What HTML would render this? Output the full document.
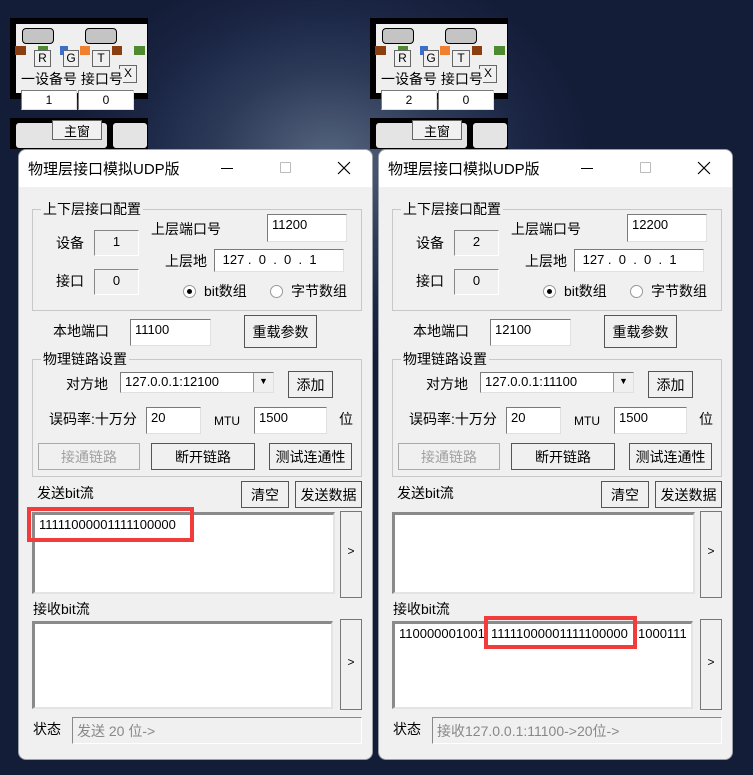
<!DOCTYPE html>
<html><head><meta charset="utf-8">
<style>
*{box-sizing:border-box;margin:0;padding:0}
body{width:753px;height:775px;overflow:hidden;position:relative;font-family:"Liberation Sans","Noto Sans CJK SC",sans-serif;font-size:14px;color:#000;
background:radial-gradient(ellipse 260px 200px at 330px 160px,#56657f 0%,#2c3a58 45%,#1b2645 75%,#141d38 100%),#141d38;}
.a{position:absolute}
.win{position:absolute;top:149px;width:355px;height:611px;background:#f0f0f0;border-radius:8px;overflow:hidden;border:1px solid #9aa0a8}
.tb{position:absolute;left:0;top:0;width:100%;height:37px;background:#fff}
.tt{position:absolute;left:9px;top:8px;font-size:15px}
.grp{position:absolute;border:1px solid #c8c8c8}
.gt{position:absolute;background:#f0f0f0;padding:0 2px;white-space:nowrap}
.in{position:absolute;background:#fff;border:1px solid #7a7a7a;border-right-color:#e0e0e0;border-bottom-color:#e0e0e0;font-size:13px;padding:2px 4px;white-space:nowrap}
.ro{position:absolute;background:#f0f0f0;border:1px solid #888;border-right-color:#fff;border-bottom-color:#fff;font-size:13px;text-align:center;padding-top:3px}
.ta{position:absolute;background:#fff;border:3px solid #8a8a8a;border-right:2px solid #e4e4e4;border-bottom:2px solid #e4e4e4}
.bt{position:absolute;background:#f0f0f0;border:1px solid #555;text-align:center;font-size:14px;white-space:nowrap}
.red{position:absolute;border:4px solid #f23b3b}
.rad{position:absolute;width:13px;height:13px;border-radius:50%;background:#fff;border:1px solid #999}
.wg{position:absolute;top:18px;width:138px;height:131px}
</style></head><body>

<div class="wg" style="left:10px">
 <div class="a" style="left:0;top:0;width:138px;height:81px;background:#000"></div>
 <div class="a" style="left:5px;top:5px;width:133px;height:71px;background:#efefef;border:1px solid #000"></div>
 <div class="a" style="left:12px;top:10px;width:32px;height:16px;background:#c4c4c4;border:1px solid #000;border-radius:4px"></div>
 <div class="a" style="left:75px;top:10px;width:32px;height:16px;background:#c4c4c4;border:1px solid #000;border-radius:4px"></div>
 <div class="a" style="left:5px;top:28px;width:11px;height:9px;background:#8b3e10"></div>
 <div class="a" style="left:28px;top:28px;width:10px;height:9px;background:#4f8a30"></div>
 <div class="a" style="left:50px;top:28px;width:8px;height:9px;background:#3b6fc9"></div>
 <div class="a" style="left:70px;top:28px;width:10px;height:9px;background:#ee8030"></div>
 <div class="a" style="left:102px;top:28px;width:10px;height:9px;background:#8b3e10"></div>
 <div class="a" style="left:124px;top:28px;width:11px;height:9px;background:#4f8a30"></div>
 <div class="bt" style="left:24px;top:32px;width:17px;height:17px;font-size:12px;border-color:#666">R</div>
 <div class="bt" style="left:53px;top:32px;width:16px;height:17px;font-size:12px;border-color:#666">G</div>
 <div class="bt" style="left:82px;top:32px;width:18px;height:17px;font-size:12px;border-color:#666">T</div>
 <div class="bt" style="left:109px;top:47px;width:18px;height:18px;font-size:12px;border-color:#666">X</div>
 <div class="a" style="left:11px;top:51px;font-size:14px;white-space:nowrap;background:#efefef">一设备号 接口号</div>
 <div class="in" style="left:11px;top:72px;width:56px;height:20px;text-align:center;font-size:12px;padding:2px">1</div>
 <div class="in" style="left:68px;top:72px;width:56px;height:20px;text-align:center;font-size:12px;padding:2px">0</div>
 <div class="a" style="left:0;top:100px;width:138px;height:31px;background:#000"></div>
 <div class="a" style="left:5px;top:104px;width:93px;height:27px;background:#e4e4e4;border:1px solid #000;border-radius:4px"></div>
 <div class="a" style="left:102px;top:104px;width:36px;height:27px;background:#e4e4e4;border:1px solid #000;border-radius:4px"></div>
 <div class="bt" style="left:42px;top:102px;width:50px;height:20px;font-size:13px;border-color:#666">主窗</div>
</div>
<div class="wg" style="left:370px">
 <div class="a" style="left:0;top:0;width:138px;height:81px;background:#000"></div>
 <div class="a" style="left:5px;top:5px;width:133px;height:71px;background:#efefef;border:1px solid #000"></div>
 <div class="a" style="left:12px;top:10px;width:32px;height:16px;background:#c4c4c4;border:1px solid #000;border-radius:4px"></div>
 <div class="a" style="left:75px;top:10px;width:32px;height:16px;background:#c4c4c4;border:1px solid #000;border-radius:4px"></div>
 <div class="a" style="left:5px;top:28px;width:11px;height:9px;background:#8b3e10"></div>
 <div class="a" style="left:28px;top:28px;width:10px;height:9px;background:#4f8a30"></div>
 <div class="a" style="left:50px;top:28px;width:8px;height:9px;background:#3b6fc9"></div>
 <div class="a" style="left:70px;top:28px;width:10px;height:9px;background:#ee8030"></div>
 <div class="a" style="left:102px;top:28px;width:10px;height:9px;background:#8b3e10"></div>
 <div class="a" style="left:124px;top:28px;width:11px;height:9px;background:#4f8a30"></div>
 <div class="bt" style="left:24px;top:32px;width:17px;height:17px;font-size:12px;border-color:#666">R</div>
 <div class="bt" style="left:53px;top:32px;width:16px;height:17px;font-size:12px;border-color:#666">G</div>
 <div class="bt" style="left:82px;top:32px;width:18px;height:17px;font-size:12px;border-color:#666">T</div>
 <div class="bt" style="left:109px;top:47px;width:18px;height:18px;font-size:12px;border-color:#666">X</div>
 <div class="a" style="left:11px;top:51px;font-size:14px;white-space:nowrap;background:#efefef">一设备号 接口号</div>
 <div class="in" style="left:11px;top:72px;width:56px;height:20px;text-align:center;font-size:12px;padding:2px">2</div>
 <div class="in" style="left:68px;top:72px;width:56px;height:20px;text-align:center;font-size:12px;padding:2px">0</div>
 <div class="a" style="left:0;top:100px;width:138px;height:31px;background:#000"></div>
 <div class="a" style="left:5px;top:104px;width:93px;height:27px;background:#e4e4e4;border:1px solid #000;border-radius:4px"></div>
 <div class="a" style="left:102px;top:104px;width:36px;height:27px;background:#e4e4e4;border:1px solid #000;border-radius:4px"></div>
 <div class="bt" style="left:42px;top:102px;width:50px;height:20px;font-size:13px;border-color:#666">主窗</div>
</div>

<div class="win" style="left:18px">
 <div class="tb"><div class="tt">物理层接口模拟UDP版</div>
  <div class="a" style="left:202px;top:18px;width:12px;height:1px;background:#000"></div>
  <div class="a" style="left:261px;top:12px;width:11px;height:11px;border:1px solid #bbb;border-radius:1px"></div>
  <svg class="a" style="left:318px;top:11px" width="14" height="14"><path d="M1 1L13 13M13 1L1 13" stroke="#000" stroke-width="1.2"/></svg>
 </div>
 <div class="grp" style="left:13px;top:59px;width:330px;height:102px"></div>
 <div class="gt" style="left:22px;top:49px">上下层接口配置</div>
 <div class="a" style="left:37px;top:83px">设备</div><div class="ro" style="left:75px;top:80px;width:45px;height:26px">1</div>
 <div class="a" style="left:37px;top:121px">接口</div><div class="ro" style="left:75px;top:119px;width:45px;height:26px">0</div>
 <div class="a" style="left:132px;top:69px">上层端口号</div><div class="in" style="left:248px;top:64px;width:80px;height:28px">11200</div>
 <div class="a" style="left:146px;top:101px">上层地</div><div class="in" style="left:195px;top:99px;width:130px;height:23px">&nbsp;127 .&nbsp; 0 &nbsp;.&nbsp; 0 &nbsp;.&nbsp; 1</div>
 <div class="rad" style="left:164px;top:135px"><div class="a" style="left:3px;top:3px;width:5px;height:5px;border-radius:50%;background:#000"></div></div>
 <div class="a" style="left:185px;top:131px">bit数组</div>
 <div class="rad" style="left:251px;top:135px"></div>
 <div class="a" style="left:272px;top:131px">字节数组</div>
 <div class="a" style="left:34px;top:171px">本地端口</div><div class="in" style="left:111px;top:169px;width:81px;height:27px">11100</div>
 <div class="bt" style="left:225px;top:165px;width:73px;height:33px;padding-top:6px">重载参数</div>
 <div class="grp" style="left:13px;top:209px;width:330px;height:118px"></div>
 <div class="gt" style="left:22px;top:199px">物理链路设置</div>
 <div class="a" style="left:47px;top:224px">对方地</div>
 <div class="in" style="left:101px;top:222px;width:154px;height:21px;padding-top:1px">127.0.0.1:12100<div class="a" style="right:0;top:0;width:20px;height:19px;background:#f0f0f0;border-left:1px solid #999;font-size:9px;text-align:center;padding-top:3px">▼</div></div>
 <div class="bt" style="left:269px;top:221px;width:45px;height:27px;padding-top:3px">添加</div>
 <div class="a" style="left:30px;top:259px">误码率:十万分</div><div class="in" style="left:127px;top:257px;width:55px;height:27px">20</div>
 <div class="a" style="left:195px;top:264px;font-size:12px">MTU</div><div class="in" style="left:235px;top:257px;width:73px;height:27px">1500</div>
 <div class="a" style="left:320px;top:259px">位</div>
 <div class="bt" style="left:19px;top:293px;width:102px;height:27px;padding-top:3px;color:#a0a0a0;border-color:#aaa">接通链路</div>
 <div class="bt" style="left:132px;top:293px;width:104px;height:27px;padding-top:3px">断开链路</div>
 <div class="bt" style="left:250px;top:293px;width:83px;height:27px;padding-top:3px">测试连通性</div>
 <div class="a" style="left:18px;top:333px">发送bit流</div>
 <div class="bt" style="left:222px;top:331px;width:48px;height:27px;padding-top:3px">清空</div>
 <div class="bt" style="left:276px;top:331px;width:67px;height:27px;padding-top:3px">发送数据</div>
 <div class="ta" style="left:13px;top:362px;width:303px;height:82px"><div class="a" style="left:4px;top:2px;font-size:13px">11111000001111100000</div></div>
 <div class="red" style="left:8px;top:357px;width:167px;height:35px"></div>
 <div class="bt" style="left:321px;top:361px;width:22px;height:87px;padding-top:32px;border-color:#777;font-size:12px">&gt;</div>
 <div class="a" style="left:14px;top:449px">接收bit流</div>
 <div class="ta" style="left:13px;top:471px;width:301px;height:88px"></div>
 <div class="bt" style="left:321px;top:469px;width:22px;height:91px;padding-top:35px;border-color:#777;font-size:12px">&gt;</div>
 <div class="a" style="left:14px;top:569px">状态</div>
 <div class="ro" style="left:53px;top:567px;width:290px;height:27px;text-align:left;padding:3px 4px;color:#888;font-size:14px">发送 20 位-&gt;</div>
</div>

<div class="win" style="left:378px">
 <div class="tb"><div class="tt">物理层接口模拟UDP版</div>
  <div class="a" style="left:202px;top:18px;width:12px;height:1px;background:#000"></div>
  <div class="a" style="left:261px;top:12px;width:11px;height:11px;border:1px solid #bbb;border-radius:1px"></div>
  <svg class="a" style="left:318px;top:11px" width="14" height="14"><path d="M1 1L13 13M13 1L1 13" stroke="#000" stroke-width="1.2"/></svg>
 </div>
 <div class="grp" style="left:13px;top:59px;width:330px;height:102px"></div>
 <div class="gt" style="left:22px;top:49px">上下层接口配置</div>
 <div class="a" style="left:37px;top:83px">设备</div><div class="ro" style="left:75px;top:80px;width:45px;height:26px">2</div>
 <div class="a" style="left:37px;top:121px">接口</div><div class="ro" style="left:75px;top:119px;width:45px;height:26px">0</div>
 <div class="a" style="left:132px;top:69px">上层端口号</div><div class="in" style="left:248px;top:64px;width:80px;height:28px">12200</div>
 <div class="a" style="left:146px;top:101px">上层地</div><div class="in" style="left:195px;top:99px;width:130px;height:23px">&nbsp;127 .&nbsp; 0 &nbsp;.&nbsp; 0 &nbsp;.&nbsp; 1</div>
 <div class="rad" style="left:164px;top:135px"><div class="a" style="left:3px;top:3px;width:5px;height:5px;border-radius:50%;background:#000"></div></div>
 <div class="a" style="left:185px;top:131px">bit数组</div>
 <div class="rad" style="left:251px;top:135px"></div>
 <div class="a" style="left:272px;top:131px">字节数组</div>
 <div class="a" style="left:34px;top:171px">本地端口</div><div class="in" style="left:111px;top:169px;width:81px;height:27px">12100</div>
 <div class="bt" style="left:225px;top:165px;width:73px;height:33px;padding-top:6px">重载参数</div>
 <div class="grp" style="left:13px;top:209px;width:330px;height:118px"></div>
 <div class="gt" style="left:22px;top:199px">物理链路设置</div>
 <div class="a" style="left:47px;top:224px">对方地</div>
 <div class="in" style="left:101px;top:222px;width:154px;height:21px;padding-top:1px">127.0.0.1:11100<div class="a" style="right:0;top:0;width:20px;height:19px;background:#f0f0f0;border-left:1px solid #999;font-size:9px;text-align:center;padding-top:3px">▼</div></div>
 <div class="bt" style="left:269px;top:221px;width:45px;height:27px;padding-top:3px">添加</div>
 <div class="a" style="left:30px;top:259px">误码率:十万分</div><div class="in" style="left:127px;top:257px;width:55px;height:27px">20</div>
 <div class="a" style="left:195px;top:264px;font-size:12px">MTU</div><div class="in" style="left:235px;top:257px;width:73px;height:27px">1500</div>
 <div class="a" style="left:320px;top:259px">位</div>
 <div class="bt" style="left:19px;top:293px;width:102px;height:27px;padding-top:3px;color:#a0a0a0;border-color:#aaa">接通链路</div>
 <div class="bt" style="left:132px;top:293px;width:104px;height:27px;padding-top:3px">断开链路</div>
 <div class="bt" style="left:250px;top:293px;width:83px;height:27px;padding-top:3px">测试连通性</div>
 <div class="a" style="left:18px;top:333px">发送bit流</div>
 <div class="bt" style="left:222px;top:331px;width:48px;height:27px;padding-top:3px">清空</div>
 <div class="bt" style="left:276px;top:331px;width:67px;height:27px;padding-top:3px">发送数据</div>
 <div class="ta" style="left:13px;top:362px;width:303px;height:82px"></div>
 <div class="bt" style="left:321px;top:361px;width:22px;height:87px;padding-top:32px;border-color:#777;font-size:12px">&gt;</div>
 <div class="a" style="left:14px;top:449px">接收bit流</div>
 <div class="ta" style="left:13px;top:471px;width:301px;height:88px"></div>
 <div class="a" style="left:20px;top:476px;font-size:13px;white-space:nowrap">110000001001</div>
 <div class="a" style="left:112px;top:476px;font-size:13px;white-space:nowrap">11111000001111100000</div>
 <div class="a" style="left:259px;top:476px;font-size:13px;white-space:nowrap">1000111</div>
 <div class="red" style="left:105px;top:466px;width:153px;height:33px"></div>
 <div class="bt" style="left:321px;top:469px;width:22px;height:91px;padding-top:35px;border-color:#777;font-size:12px">&gt;</div>
 <div class="a" style="left:14px;top:569px">状态</div>
 <div class="ro" style="left:53px;top:567px;width:290px;height:27px;text-align:left;padding:3px 4px;color:#888;font-size:14px">接收127.0.0.1:11100-&gt;20位-&gt;</div>
</div>
</body></html>
